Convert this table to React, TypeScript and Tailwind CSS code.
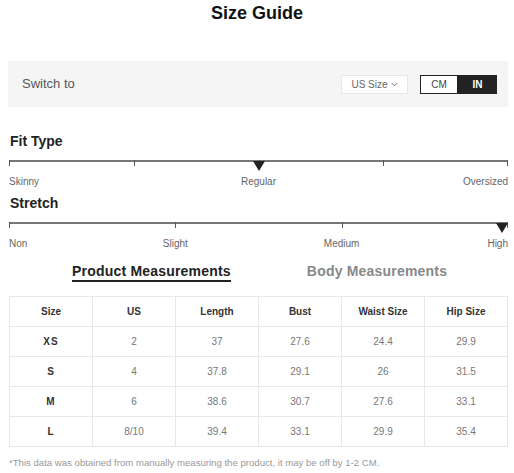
import React from 'react';

const rows = [
  ['XS', '2', '37', '27.6', '24.4', '29.9'],
  ['S', '4', '37.8', '29.1', '26', '31.5'],
  ['M', '6', '38.6', '30.7', '27.6', '33.1'],
  ['L', '8/10', '39.4', '33.1', '29.9', '35.4'],
];

const headers = ['Size', 'US', 'Length', 'Bust', 'Waist Size', 'Hip Size'];

const Pointer = () => (
  <svg width="12" height="10" viewBox="0 0 12 10" className="block">
    <path d="M0 0 H12 L6 10 Z" fill="#222" />
  </svg>
);

interface ScaleProps {
  ticks: number[];
  pointer: number;
  labels: { text: string; at: number }[];
}

// ticks/labels are placed as fractions along the 499px line
const Scale: React.FC<ScaleProps> = ({ ticks, pointer, labels }) => (
  <div className="mx-[9px] w-[499px]">
    <div className="relative h-[15px]">
      <div className="h-[2px] bg-[#777]" />
      {ticks.map((t) => (
        <div
          key={t}
          className="absolute top-0 h-[6px] w-[1px] bg-[#555]"
          style={{ left: t === 1 ? 'calc(100% - 1px)' : `${t * 100}%` }}
        />
      ))}
      <div
        className="absolute top-[1px]"
        style={pointer === 1 ? { right: 0 } : { left: `calc(${pointer * 100}% - 6px)` }}
      >
        <Pointer />
      </div>
    </div>
    <div className="relative h-[14px] text-[10px] leading-[14px] text-[#666]">
      {labels.map((l) => (
        <span
          key={l.text}
          className="absolute top-0 whitespace-nowrap"
          style={
            l.at === 0
              ? { left: 0 }
              : l.at === 1
              ? { right: 0 }
              : { left: `${l.at * 100}%`, transform: 'translateX(-50%)' }
          }
        >
          {l.text}
        </span>
      ))}
    </div>
  </div>
);

export default function App() {
  return (
    <div className="w-[514px] h-[473px] bg-white overflow-hidden font-['Liberation_Sans',Arial,sans-serif] text-[#222]">
      <h1 className="text-center text-[18px] font-bold leading-[26px] text-[#111]">Size Guide</h1>

      {/* Switch bar */}
      <div className="mt-[35px] ml-[8px] w-[500px] h-[46px] bg-[#f5f5f5] flex items-center justify-between pl-[14px] pr-[11px]">
        <span className="text-[13px] text-[#555]">Switch to</span>
        <div className="flex items-center gap-[12px]">
          <div className="w-[67px] h-[19px] bg-white border border-[#e6e6e6] flex items-center justify-center gap-[3px] text-[10px] text-[#666]">
            US Size
            <svg width="7" height="5" viewBox="0 0 7 5">
              <path d="M0.5 0.8 L3.5 3.8 L6.5 0.8" fill="none" stroke="#777" strokeWidth="1" />
            </svg>
          </div>
          <div className="flex h-[19px] text-[10px]">
            <div className="w-[38px] border border-[#222] bg-white flex items-center justify-center text-[#444]">CM</div>
            <div className="w-[39px] bg-[#222] flex items-center justify-center font-bold text-white">IN</div>
          </div>
        </div>
      </div>

      {/* Fit type */}
      <div className="mt-[24px] ml-[10px] text-[14px] font-bold leading-[20px]">Fit Type</div>
      <div className="mt-[9px]">
        <Scale
          ticks={[0, 0.25, 0.5, 0.75, 1]}
          pointer={0.5}
          labels={[
            { text: 'Skinny', at: 0 },
            { text: 'Regular', at: 0.5 },
            { text: 'Oversized', at: 1 },
          ]}
        />
      </div>

      {/* Stretch */}
      <div className="mt-[4px] ml-[10px] text-[14px] font-bold leading-[20px]">Stretch</div>
      <div className="mt-[9px]">
        <Scale
          ticks={[0, 1 / 3, 2 / 3, 1]}
          pointer={1}
          labels={[
            { text: 'Non', at: 0 },
            { text: 'Slight', at: 1 / 3 },
            { text: 'Medium', at: 2 / 3 },
            { text: 'High', at: 1 },
          ]}
        />
      </div>

      {/* Tabs */}
      <div className="mt-[11px] ml-[72px] flex gap-[76px] text-[14px] font-bold leading-[18px] tracking-[0.2px]">
        <span className="border-b-2 border-[#222] text-[#222]">Product Measurements</span>
        <span className="text-[#888]">Body Measurements</span>
      </div>

      {/* Table */}
      <table className="mt-[14px] ml-[9px] w-[499px] table-fixed border-collapse text-[10px] text-center">
        <thead>
          <tr className="h-[30px]">
            {headers.map((h) => (
              <th key={h} className="border border-[#e8e8e8] font-bold text-[#333]">{h}</th>
            ))}
          </tr>
        </thead>
        <tbody>
          {rows.map((r) => (
            <tr key={r[0]} className="h-[30px]">
              {r.map((c, i) => (
                <td
                  key={i}
                  className={i === 0 ? 'border border-[#e8e8e8] font-bold text-[#333] tracking-[1px]' : 'border border-[#e8e8e8] text-[#777]'}
                >
                  {c}
                </td>
              ))}
            </tr>
          ))}
        </tbody>
      </table>

      <p className="mt-[9px] ml-[9px] text-[9.6px] leading-[14px] text-[#999]">
        *This data was obtained from manually measuring the product, it may be off by 1-2 CM.
      </p>
    </div>
  );
}
